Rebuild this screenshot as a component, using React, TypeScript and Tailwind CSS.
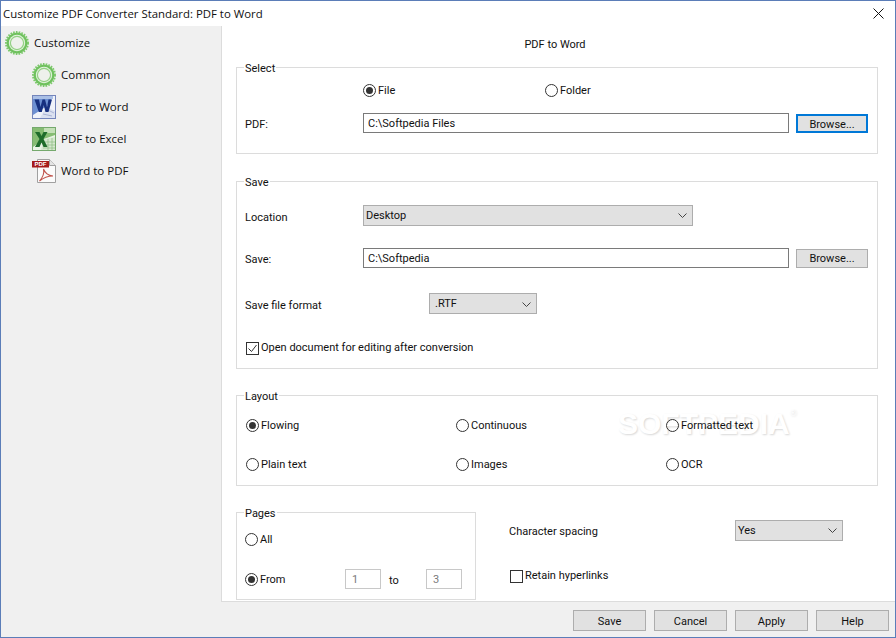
import type { ReactNode } from "react";

const SIDE_FONT = "font-['Open_Sans',sans-serif] text-[11.5px]";

function Radio({ checked, label, className = "" }: { checked?: boolean; label: string; className?: string }) {
  return (
    <div className={`flex items-center gap-[2px] ${className}`}>
      <span className="flex h-[13px] w-[13px] shrink-0 items-center justify-center rounded-full border border-[#333]">
        {checked && <span className="h-[7px] w-[7px] rounded-full bg-[#333]" />}
      </span>
      <span className="block h-[16px] pt-[1px]">{label}</span>
    </div>
  );
}

function Group({ title, className = "", children }: { title: string; className?: string; children: ReactNode }) {
  return (
    <fieldset className={`border border-[#dcdcdc] pl-2 ${className}`}>
      <legend className="ml-[-1px] px-[1px] pt-[4px] leading-[16px]">{title}</legend>
      {children}
    </fieldset>
  );
}

function Select({ value, className }: { value: string; className: string }) {
  return (
    <div className={`flex items-center justify-between border border-[#adadad] bg-[#e1e1e1] pr-[5px] ${className}`}>
      <span>{value}</span>
      <svg width="9" height="5" viewBox="0 0 9 5" fill="none" stroke="#444" strokeWidth="1">
        <path d="M0.5 0.5 L4.5 4.5 L8.5 0.5" />
      </svg>
    </div>
  );
}

function Button({ label, className = "" }: { label: string; className?: string }) {
  return <div className={`flex items-center justify-center bg-[#e1e1e1] ${className}`}>{label}</div>;
}

function GearIcon() {
  return (
    <svg width="24" height="24" viewBox="0 0 24 24" className="shrink-0">
      <circle cx="12" cy="12" r="10.5" fill="#6fc15e" />
      <circle cx="12" cy="12" r="11" fill="none" stroke="#7cc86b" strokeWidth="2" strokeDasharray="1.6 1.2" />
      <circle cx="12" cy="12" r="8.2" fill="#e4f3df" />
      <circle cx="12" cy="12" r="6.6" fill="#eef1ec" stroke="#93d184" strokeWidth="1.2" />
    </svg>
  );
}

function WordIcon() {
  return (
    <svg width="24" height="24" viewBox="0 0 24 24" className="shrink-0">
      <rect x="0.5" y="0.5" width="23" height="23" fill="#f0f3fa" stroke="#7485bb" />
      <path d="M1 1 H21 L15 11 L1 20 Z" fill="#6d90d2" />
      <path d="M1 1 H21 V4 H1 Z" fill="#a9bfe6" />
      <path d="M14 12 L23 16 V23 H8 Z" fill="#dbe1f0" />
      <path d="M14 14 L22 18 M11 19 L20 21" stroke="#9aa7cc" strokeWidth="0.8" />
      <path d="M2.5 4.5 H7 L8.5 12 L10.5 4.5 H13 L15 12 L16.5 4.5 H20 L16.5 17 H13.5 L11.7 10 L9.8 17 H6.8 Z" fill="#17307f" />
    </svg>
  );
}

function ExcelIcon() {
  return (
    <svg width="24" height="24" viewBox="0 0 24 24" className="shrink-0">
      <rect x="0.5" y="0.5" width="23" height="23" fill="#eaf4e6" stroke="#75a96d" />
      <path d="M1 1 H23 V8 L12 12 L1 20 Z" fill="#86bd73" />
      <path d="M12 1 H23 V6 H12 Z" fill="#c4e0b8" />
      <path d="M12 12 L23 10 V23 H9 Z" fill="#d6e8cf" />
      <path d="M13 15 H23 M12 18 H23 M11 21 H23 M16 12 V23 M20 11 V23" stroke="#8ebb83" strokeWidth="0.7" />
      <path d="M3 5 H7.5 L9.5 9 L11.5 5 H15.5 L11.5 12 L15.5 20 H11.5 L9.5 15.5 L7.5 20 H3 L7.5 12 Z" fill="#1f6d2b" />
    </svg>
  );
}

function AcrobatIcon() {
  return (
    <svg width="24" height="24" viewBox="0 0 24 24" className="shrink-0">
      <path d="M5.5 0.5 H17.5 L23.5 6.5 V23.5 H5.5 Z" fill="#fbfbfb" stroke="#a0a0a0" />
      <path d="M17.5 0.5 V6.5 H23.5" fill="#e4e4e4" stroke="#a0a0a0" />
      <rect x="0" y="2" width="17" height="6.5" fill="#a51c1c" />
      <text x="8.5" y="7.4" textAnchor="middle" fontSize="6" fontWeight="700" fill="#fff" fontFamily="Liberation Sans, sans-serif">PDF</text>
      <path d="M7.5 22 C11 18 12.5 14 11.5 10 C13 14 15.5 16.5 21 17 C15.5 17 11 19 7.5 22 Z" fill="none" stroke="#c1544c" strokeWidth="1.1" />
    </svg>
  );
}

function NavItem({ icon, label, className = "" }: { icon: ReactNode; label: string; className?: string }) {
  return (
    <div className={`flex h-8 items-center gap-[5px] ${className}`}>
      {icon}
      <span>{label}</span>
    </div>
  );
}

export default function App() {
  return (
    <div className="flex h-[638px] w-[896px] flex-col overflow-hidden border border-[#5b7db8] bg-white font-['Roboto',sans-serif] text-[11px] leading-[16px] text-[#111]">
      <div className="flex h-[25px] shrink-0 items-center justify-between pl-[2px] pr-[11px] font-['Open_Sans',sans-serif] text-[11.4px]">
        <span>Customize PDF Converter Standard: PDF to Word</span>
        <svg width="11" height="11" viewBox="0 0 11 11" stroke="#111" strokeWidth="1">
          <path d="M0.5 0.5 L10.5 10.5 M10.5 0.5 L0.5 10.5" />
        </svg>
      </div>

      <div className="flex min-h-0 flex-1">
        <div className={`flex w-[220px] shrink-0 flex-col bg-[#f0f0f0] pt-[1px] ${SIDE_FONT}`}>
          <NavItem icon={<GearIcon />} label="Customize" className="pl-[4px]" />
          <NavItem icon={<GearIcon />} label="Common" className="pl-[31px]" />
          <NavItem icon={<WordIcon />} label="PDF to Word" className="pl-[31px]" />
          <NavItem icon={<ExcelIcon />} label="PDF to Excel" className="pl-[31px]" />
          <NavItem icon={<AcrobatIcon />} label="Word to PDF" className="pl-[31px]" />
        </div>

        <div className="flex min-w-0 flex-1 flex-col">
          <div className="relative isolate h-[577px] border-b border-l border-[#dcdcdc] pl-[14px] pr-[17px]">
            <div className="absolute left-[396px] top-[380px] -z-10 flex items-start font-['Liberation_Sans',sans-serif] text-[30px] font-bold leading-[36px] text-white [text-shadow:1px_1px_2px_#d8d8d8]">
              SOFTPEDIA
              <span className="text-[9px] font-normal leading-[14px]">®</span>
            </div>

            <div className="pb-[4px] pr-[4px] pt-[11px] text-center">PDF to Word</div>

            <Group title="Select" className="h-[97px]">
              <div className="flex h-[26px] items-center pl-[118px]">
                <Radio checked label="File" className="w-[182px]" />
                <Radio label="Folder" />
              </div>
              <div className="mt-[10px] flex items-end">
                <span className="w-[118px]">PDF:</span>
                <div className="flex h-[20px] w-[426px] items-center border border-[#7a7a7a] pl-[4px] pt-[2px]">C:\Softpedia Files</div>
                <Button label="Browse..." className="ml-[7px] h-[19px] w-[72px] border-2 border-[#0078d7] pt-[2px]" />
              </div>
            </Group>

            <Group title="Save" className="mt-[17px] h-[198px]">
              <div className="mt-[14px] flex items-center">
                <span className="w-[118px] pt-[5px]">Location</span>
                <Select value="Desktop" className="h-[21px] w-[330px] pl-[2px]" />
              </div>
              <div className="mt-[22px] flex items-center">
                <span className="w-[118px] pt-[3px]">Save:</span>
                <div className="flex h-[20px] w-[426px] items-center border border-[#7a7a7a] pl-[4px] pt-[2px]">C:\Softpedia</div>
                <Button label="Browse..." className="ml-[7px] h-[19px] w-[72px] border border-[#adadad] pt-[2px]" />
              </div>
              <div className="mt-[25px] flex items-center">
                <span className="w-[184px] pt-[4px]">Save file format</span>
                <Select value=".RTF" className="h-[21px] w-[108px] pl-[5px] pt-[1px]" />
              </div>
              <div className="mt-[26px] flex items-center gap-[2px] pl-[1px]">
                <span className="flex h-[13px] w-[13px] items-center justify-center border border-[#333]">
                  <svg width="11" height="11" viewBox="0 0 11 11" fill="none" stroke="#333" strokeWidth="1">
                    <path d="M1.5 5.5 L4.5 8.5 L9.5 2" />
                  </svg>
                </span>
                <span>Open document for editing after conversion</span>
              </div>
            </Group>

            <Group title="Layout" className="mt-[16px] h-[101px]">
              <div className="grid grid-cols-[210px_210px_1fr] gap-y-[23px] pl-[1px] pt-[12px]">
                <Radio checked label="Flowing" />
                <Radio label="Continuous" />
                <Radio label="Formatted text" />
                <Radio label="Plain text" />
                <Radio label="Images" />
                <Radio label="OCR" />
              </div>
            </Group>

            <div className="mt-[16px] flex">
              <Group title="Pages" className="h-[98px] w-[240px]">
                <Radio label="All" className="mt-[9px]" />
                <div className="mt-[22px] flex items-center">
                  <Radio checked label="From" className="w-[100px]" />
                  <div className="flex h-[20px] w-[36px] items-center border border-[#c8c8c8] pl-[6px] pt-[1px] text-[#7a7a7a]">1</div>
                  <span className="ml-[8px] w-[37px] pt-[3px]">to</span>
                  <div className="flex h-[20px] w-[36px] items-center border border-[#c8c8c8] pl-[6px] pt-[1px] text-[#7a7a7a]">3</div>
                </div>
              </Group>
              <div className="ml-[33px] flex flex-col pt-[18px]">
                <div className="flex items-center">
                  <span className="w-[226px] pt-[2px]">Character spacing</span>
                  <Select value="Yes" className="h-[21px] w-[108px] pl-[2px]" />
                </div>
                <div className="mt-[27px] flex items-center gap-[2px] pl-[1px]">
                  <span className="h-[13px] w-[13px] border border-[#333]" />
                  <span>Retain hyperlinks</span>
                </div>
              </div>
            </div>
          </div>
        </div>
      </div>

      <div className="flex h-[35px] shrink-0 items-center justify-end gap-[8px] bg-[#f0f0f0] pr-[6px] pt-[1px]">
        {["Save", "Cancel", "Apply", "Help"].map((b) => (
          <Button key={b} label={b} className="h-[21px] w-[73px] border border-[#adadad] pt-[3px]" />
        ))}
      </div>
    </div>
  );
}
